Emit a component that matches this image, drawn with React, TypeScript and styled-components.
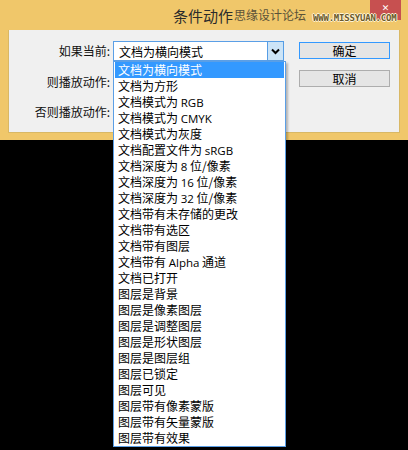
import styled, { createGlobalStyle } from 'styled-components';

const Global = createGlobalStyle`
  html, body { margin: 0; padding: 0; background: #000; }
  body { width: 408px; height: 450px; overflow: hidden; font-family: "Noto Sans CJK SC", "Liberation Sans", sans-serif; }
`;

const Window = styled.div`
  position: relative; width: 408px; height: 140px; background: #f0c76a;
  display: flex; flex-direction: column; box-sizing: border-box; padding: 0 8px 7px 8px;
`;
const TitleBar = styled.div`
  height: 30px; display: flex; align-items: center; padding-left: 165px; position: relative;
`;
const Title = styled.span`font-size: 15px; color: #2b2b2b; line-height: 1;`;
const Mark = styled.span`font-size: 12px; color: #5a5238; line-height: 1; margin-left: 1px;`;
const Url = styled.span`
  position: absolute; left: 305px; top: 14px; z-index: 2; line-height: 8px;
  font-family: "DejaVu Sans Mono", monospace; font-size: 9px; font-weight: bold; color: #6b5a2c;
  text-shadow: 1px 0 #fff4d8, -1px 0 #fff4d8, 0 1px #fff4d8, 0 -1px #fff4d8; letter-spacing: -0.2px;
`;
const Close = styled.div`
  position: absolute; right: -1px; top: 0; width: 31px; height: 20px; background: #c75050;
  color: #fff; font-size: 9px; line-height: 8px; font-weight: bold; display: flex; align-items: flex-start;
  justify-content: center; padding-top: 4px; box-sizing: border-box;
  font-family: "DejaVu Sans", sans-serif;
`;
const Panel = styled.div`
  flex: 1; background: #f0f0f0; border: 1px solid #d9b865; border-top: none;
  display: flex; padding: 11px 0 0 0; position: relative;
`;
const Form = styled.div`
  display: grid; grid-template-columns: 103px 171px; grid-auto-rows: 20px; row-gap: 10.5px; column-gap: 1px;
`;
const Label = styled.div`
  font-size: 12px; color: #111; text-align: right; line-height: 20px; padding-right: 2px;
`;
const SelectBox = styled.div`
  position: relative; height: 20px; box-sizing: border-box; border: 1px solid #5b9fe6; background: #fff;
  display: flex; align-items: center; font-size: 12px; color: #000; padding-left: 5px;
`;
const Arrow = styled.div`
  position: absolute; right: -1px; top: -1px; width: 17px; height: 20px; box-sizing: border-box;
  background: #cce4f7; border: 1px solid #569de5; display: flex; align-items: center; justify-content: center;
`;
const List = styled.div`
  position: absolute; left: -1px; top: 19px; width: 173px; box-sizing: border-box; z-index: 5;
  background: #fff; border: 1px solid #5b9fe6; box-shadow: 2px 2px 2px rgba(0,0,0,0.25);
  display: flex; flex-direction: column; padding: 0 1px;
`;
const Item = styled.div<{ $on?: boolean }>`
  height: 16px; line-height: 16px; font-size: 12px; padding-left: 3px; white-space: nowrap; overflow: hidden;
  background: ${p => (p.$on ? '#3399ff' : '#fff')}; color: ${p => (p.$on ? '#fff' : '#000')};
`;
const Latin = styled.span`font-family: "Open Sans", "Liberation Sans", sans-serif; font-size: 11.5px; line-height: 1;`;
const Buttons = styled.div`
  display: flex; flex-direction: column; gap: 11px; margin-left: 15px; padding-top: 1px;
`;
const Btn = styled.div<{ $primary?: boolean }>`
  width: 91px; height: 17px; box-sizing: border-box; font-size: 12px; color: #000;
  display: flex; align-items: center; justify-content: center;
  background: #e5e5e5; border: 1px solid ${p => (p.$primary ? '#3399ff' : '#adadad')};
`;

const items: (string | [string, string, string?])[] = [
  '文档为横向模式', '文档为方形', ['文档模式为 ', 'RGB'], ['文档模式为 ', 'CMYK'], '文档模式为灰度',
  ['文档配置文件为 ', 'sRGB'], ['文档深度为 ', '8', ' 位/像素'], ['文档深度为 ', '16', ' 位/像素'],
  ['文档深度为 ', '32', ' 位/像素'], '文档带有未存储的更改', '文档带有选区', '文档带有图层',
  ['文档带有 ', 'Alpha', ' 通道'], '文档已打开', '图层是背景', '图层是像素图层', '图层是调整图层',
  '图层是形状图层', '图层是图层组', '图层已锁定', '图层可见', '图层带有像素蒙版', '图层带有矢量蒙版', '图层带有效果',
];

export default function App() {
  return (
    <>
      <Global />
      <Window>
        <TitleBar>
          <Title>条件动作</Title>
          <Mark>思缘设计论坛</Mark>
          <Url>WWW.MISSYUAN.COM</Url>
          <Close>✕</Close>
        </TitleBar>
        <Panel>
          <Form>
            <Label>如果当前:</Label>
            <SelectBox>
              文档为横向模式
              <Arrow>
                <svg width="9" height="7" viewBox="0 0 9 7">
                  <path d="M1 1.5 L4.5 5 L8 1.5" stroke="#000" strokeWidth="2" fill="none" />
                </svg>
              </Arrow>
              <List>
                {items.map((it, i) => (
                  <Item key={i} $on={i === 0}>
                    {typeof it === 'string' ? it : (
                      <>{it[0]}<Latin>{it[1]}</Latin>{it[2] ?? ''}</>
                    )}
                  </Item>
                ))}
              </List>
            </SelectBox>
            <Label>则播放动作:</Label>
            <div />
            <Label>否则播放动作:</Label>
            <div />
          </Form>
          <Buttons>
            <Btn $primary>确定</Btn>
            <Btn>取消</Btn>
          </Buttons>
        </Panel>
      </Window>
    </>
  );
}
